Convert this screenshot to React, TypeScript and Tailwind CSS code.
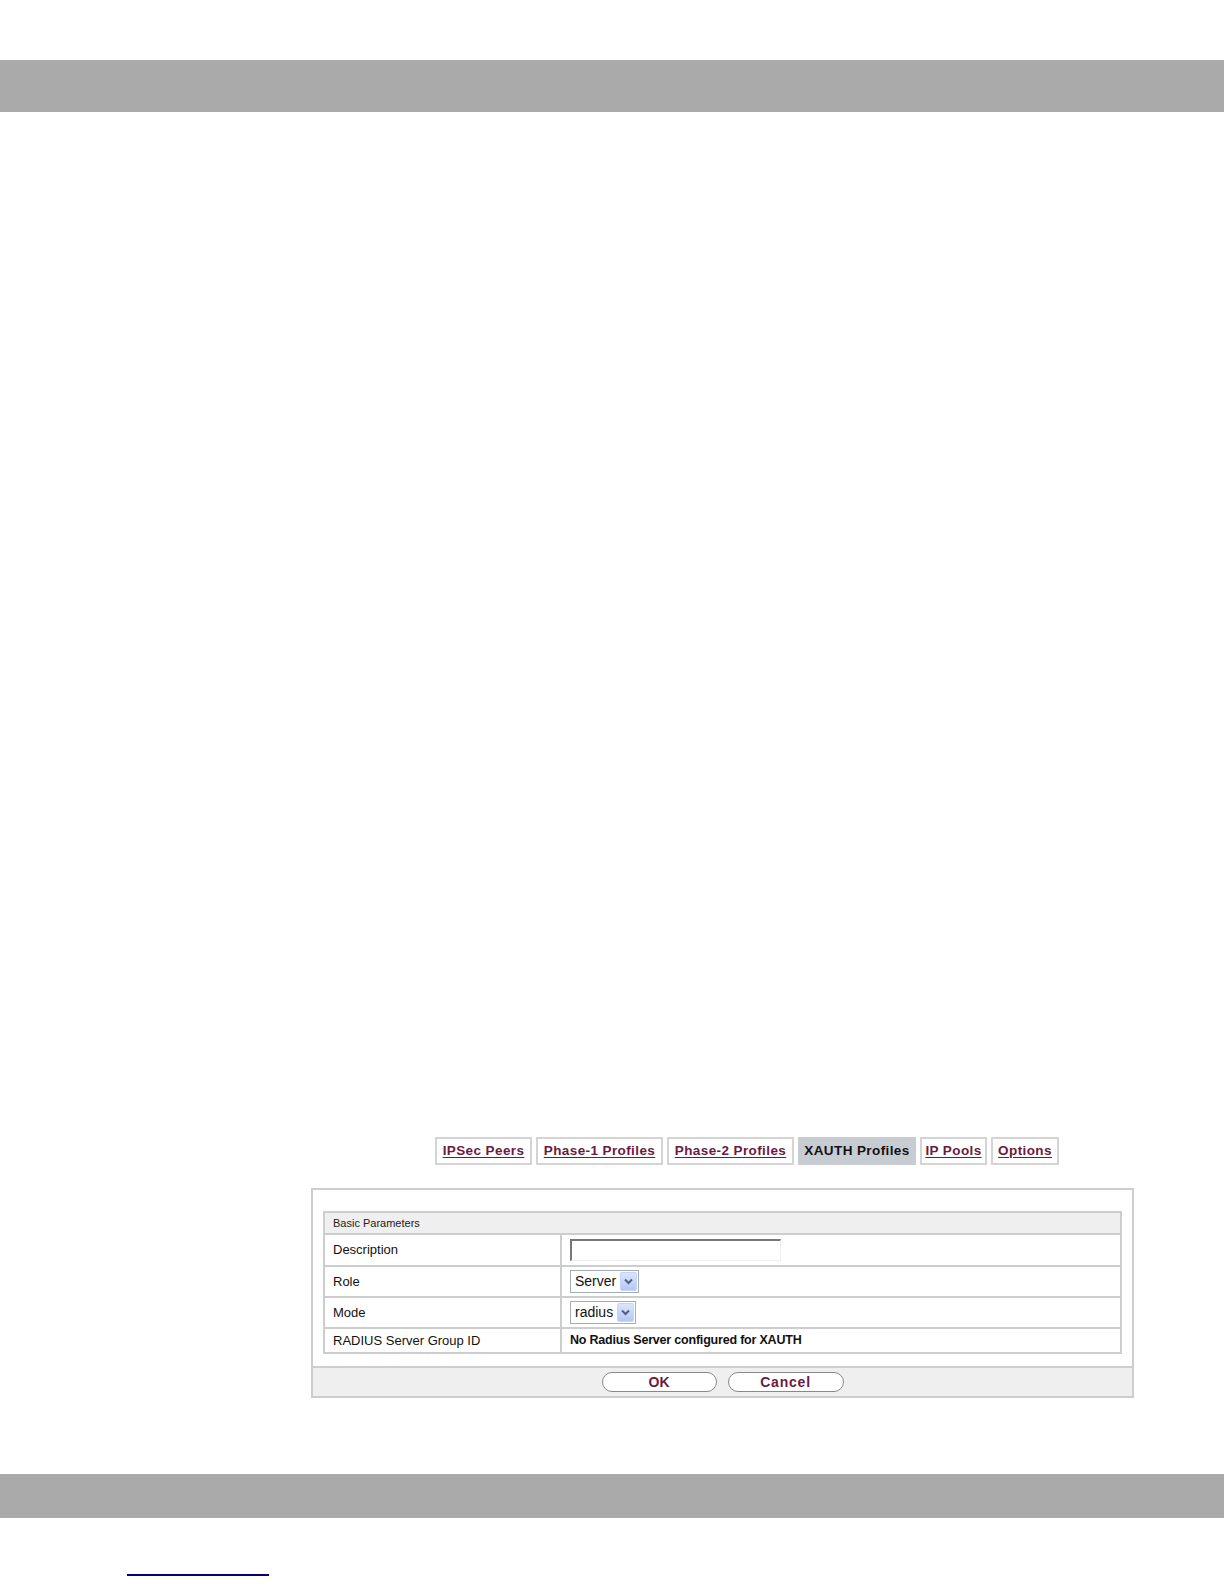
import React from "react";

const tabs = [
  { label: "IPSec Peers", w: "w-[97px]" },
  { label: "Phase-1 Profiles", w: "w-[127px]" },
  { label: "Phase-2 Profiles", w: "w-[127px]" },
  { label: "XAUTH Profiles", w: "w-[118px]", active: true },
  { label: "IP Pools", w: "w-[67px]" },
  { label: "Options", w: "w-[68px]" },
];

function SelectBox({ value, w }: { value: string; w: string }) {
  return (
    <div className={`flex items-center h-[23px] ${w} border border-[#a5acb5] bg-white`}>
      <span className="flex-1 pl-[4px] text-[14px] text-[#111]">{value}</span>
      <span className="mr-[1px] flex h-[19px] w-[17px] items-center justify-center rounded-[2px] bg-gradient-to-b from-[#dbe6fb] to-[#b5c8f2] border border-[#c3d3fd]">
        <svg width="9" height="7" viewBox="0 0 9 7">
          <path d="M1 1.5 L4.5 5 L8 1.5" stroke="#4d6185" strokeWidth="2" fill="none" />
        </svg>
      </span>
    </div>
  );
}

export default function App() {
  return (
    <div className="w-[1224px] h-[1584px] bg-white font-['Liberation_Sans',Arial,sans-serif] overflow-hidden">
      <div className="h-[60px]" />
      <div className="h-[52px] bg-[#aaaaaa]" />

      {/* tabs */}
      <div className="mt-[1025px] ml-[435px] flex gap-[4px]">
        {tabs.map((t) => (
          <div
            key={t.label}
            className={`h-[28px] ${t.w} flex items-center justify-center border-2 text-[13.5px] font-bold tracking-[0.4px] ${
              t.active
                ? "bg-[#c7ccd3] border-[#c7ccd3] text-[#111]"
                : "bg-white border-[#d4d4d4] text-[#6b1b3f] underline underline-offset-2"
            }`}
          >
            {t.label}
          </div>
        ))}
      </div>

      {/* form box */}
      <div className="mt-[23px] ml-[311px] w-[823px] border-2 border-[#cdcdcd] bg-white">
        <div className="px-[10px] pt-[21px] pb-[12px]">
          <div className="border-2 border-[#cdcdcd]">
            <div className="h-[22px] bg-[#efefef] border-b-2 border-[#cdcdcd] pl-[8px] flex items-center text-[11px] text-[#222]">
              Basic Parameters
            </div>
            <div className="flex h-[32px] border-b-2 border-[#cdcdcd]">
              <div className="w-[237px] border-r-2 border-[#cdcdcd] pl-[8px] flex items-center text-[13px] text-[#111]">Description</div>
              <div className="flex-1 pl-[8px] flex items-center">
                <div className="h-[22px] w-[211px] border-t-2 border-l-2 border-[#777] border-b border-r border-b-[#eee] border-r-[#eee] bg-white" />
              </div>
            </div>
            <div className="flex h-[31px] border-b-2 border-[#cdcdcd]">
              <div className="w-[237px] border-r-2 border-[#cdcdcd] pl-[8px] flex items-center text-[13px] text-[#111]">Role</div>
              <div className="flex-1 pl-[8px] flex items-center">
                <SelectBox value="Server" w="w-[69px]" />
              </div>
            </div>
            <div className="flex h-[31px] border-b-2 border-[#cdcdcd]">
              <div className="w-[237px] border-r-2 border-[#cdcdcd] pl-[8px] flex items-center text-[13px] text-[#111]">Mode</div>
              <div className="flex-1 pl-[8px] flex items-center">
                <SelectBox value="radius" w="w-[66px]" />
              </div>
            </div>
            <div className="flex h-[23px]">
              <div className="w-[237px] border-r-2 border-[#cdcdcd] pl-[8px] flex items-center text-[13px] text-[#111]">RADIUS Server Group ID</div>
              <div className="flex-1 pl-[8px] flex items-center text-[12.5px] font-bold text-[#111] tracking-[-0.2px]">
                No Radius Server configured for XAUTH
              </div>
            </div>
          </div>
        </div>
        <div className="h-[30px] bg-[#efefef] border-t-2 border-[#cdcdcd] flex justify-center items-center gap-[11px]">
          <button className="h-[20px] w-[115px] rounded-full border border-[#888] bg-white text-[14px] font-bold text-[#6b1b3f] leading-none">
            OK
          </button>
          <button className="h-[20px] w-[116px] rounded-full border border-[#888] bg-white text-[14px] font-bold text-[#6b1b3f] leading-none tracking-[0.8px]">
            Cancel
          </button>
        </div>
      </div>

      <div className="mt-[76px] h-[44px] bg-[#aaaaaa]" />
      <div className="mt-[56px] ml-[127px] w-[142px] h-[2px] bg-[#00007f]" />
    </div>
  );
}
